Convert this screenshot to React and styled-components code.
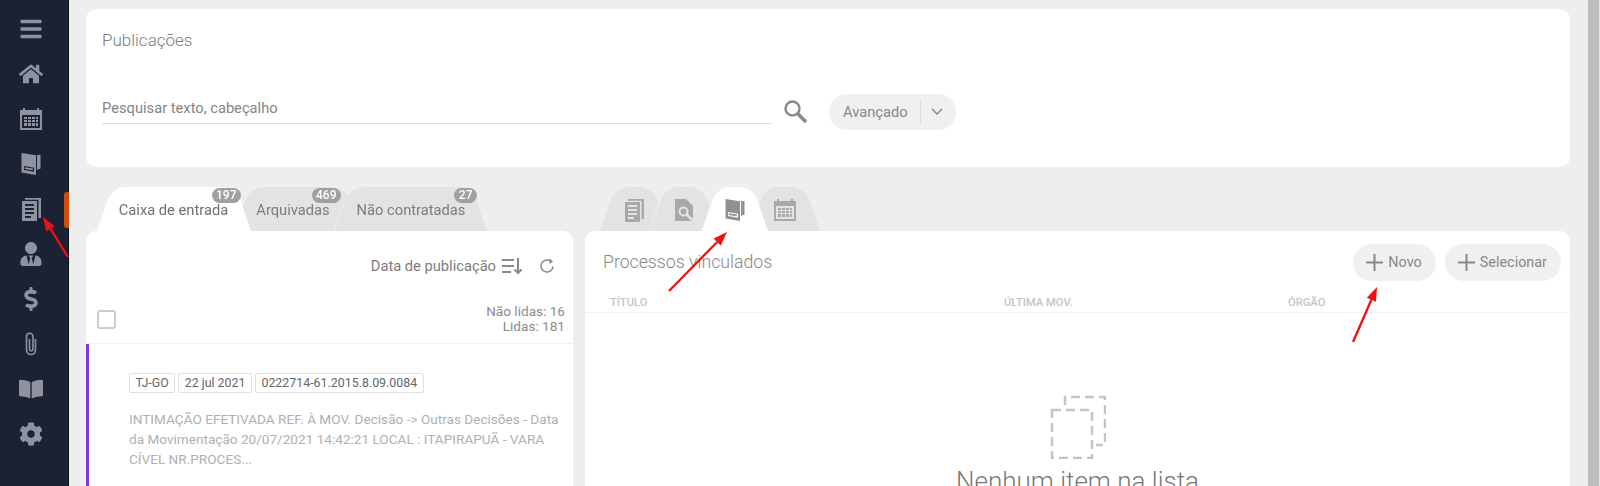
import React from "react"
import styled, { createGlobalStyle } from "styled-components"
import { FaBars, FaHome, FaUserTie, FaDollarSign, FaBookOpen, FaCog } from "react-icons/fa"

const GlobalStyle = createGlobalStyle`
  html, body {
    margin: 0;
    height: 486px;
    overflow: hidden;
    background: #eeeeee;
    font-family: Roboto, "Liberation Sans", sans-serif;
  }
`

const Page = styled.div`
  position: relative;
  display: flex;
  width: 1600px;
  height: 486px;
  overflow: hidden;
  background: #eeeeee;
`

const Sidebar = styled.nav`
  position: relative;
  flex: 0 0 69px;
  box-sizing: border-box;
  display: flex;
  flex-direction: column;
  padding-top: 6px;
  background: #1b2234;
  border-right: 1px solid #0b0e18;
  color: #90939f;
`

const SideItem = styled.div`
  height: 45px;
  width: 61px;
  display: flex;
  align-items: center;
  justify-content: center;
  font-size: 24px;
`

const ActiveMark = styled.span`
  position: absolute;
  top: 192px;
  right: -1px;
  width: 5px;
  height: 36px;
  border-radius: 3px 0 0 3px;
  background: #d14c0c;
`

const Main = styled.main`
  flex: 1;
  box-sizing: border-box;
  padding: 9px 18px 0 17px;
  display: flex;
  flex-direction: column;
  min-width: 0;
`

const Scrollbar = styled.div`
  flex: 0 0 12px;
  box-sizing: border-box;
  background: #bdbdbd;
  border-right: 1px solid #e6e6e6;
`

const Card = styled.section`
  background: #fff;
  border-radius: 10px;
`

const SearchCard = styled(Card)`
  height: 158px;
  flex: none;
  box-sizing: border-box;
  padding: 21px 16px 0;
`

const CardTitle = styled.h2`
  margin: 0;
  font-size: 17px;
  line-height: 20px;
  font-weight: 300;
  color: #7c7c7c;
`

const SearchRow = styled.div`
  display: flex;
  align-items: flex-start;
  margin-top: 34px;
`

const SearchField = styled.div`
  width: 669px;
  height: 40px;
  box-sizing: border-box;
  padding-top: 15px;
  border-bottom: 1px solid #dcdcdc;
  font-size: 14.7px;
  line-height: 18px;
  color: #858585;
`

const SearchIcon = styled.svg`
  flex: none;
  margin: 16px 22px 0 13px;
`

const AdvancedPill = styled.div`
  width: 127px;
  height: 36px;
  margin-top: 10px;
  box-sizing: border-box;
  display: flex;
  align-items: center;
  padding-left: 14px;
  border-radius: 18px;
  background: #f0f0f0;
  font-size: 14.7px;
  color: #888;
`

const PillDivider = styled.span`
  width: 1px;
  height: 26px;
  margin: 0 10px 0 12px;
  background: #dcdcdc;
`

const Columns = styled.div`
  display: flex;
  gap: 12px;
  margin-top: 20px;
  flex: 1;
  min-height: 0;
`

const LeftColumn = styled.div`
  width: 487px;
  flex: none;
  display: flex;
  flex-direction: column;
`

const RightColumn = styled.div`
  flex: 1;
  display: flex;
  flex-direction: column;
  min-width: 0;
`

const TabBar = styled.div`
  display: flex;
  height: 44px;
  flex: none;
  padding-left: ${({ $inset }) => $inset}px;
`

const Tab = styled.div`
  --tab-fill: ${({ $active }) => ($active ? "#fff" : "#e3e3e3")};
  position: relative;
  box-sizing: border-box;
  width: ${({ $w }) => $w}px;
  margin-left: ${({ $overlap }) => -($overlap || 0)}px;
  padding: 2px ${({ $pad }) => $pad || 0}px 0 0;
  z-index: ${({ $z }) => $z};
  display: flex;
  align-items: center;
  justify-content: center;
  font-size: 14.7px;
  color: ${({ $active }) => ($active ? "#707070" : "#7c7c7c")};
  filter: drop-shadow(-1px 0 0 #eeeeee);
  background: linear-gradient(var(--tab-fill), var(--tab-fill)) center bottom / 30px calc(100% - 13px) no-repeat;

  &::before,
  &::after {
    content: "";
    position: absolute;
    top: 0;
    bottom: 0;
    width: calc(50% - 10px);
    background: var(--tab-fill);
    z-index: -1;
  }

  &::before {
    left: 0;
    border-radius: 13px 0 0 0;
    transform-origin: bottom left;
    transform: skewX(-19deg);
  }

  &::after {
    right: 0;
    border-radius: 0 13px 0 0;
    transform-origin: bottom right;
    transform: skewX(19deg);
  }
`

const TabGlyph = styled.span`
  display: flex;
  color: ${({ $active }) => ($active ? "#909090" : "#a9a9a9")};
`

const Badge = styled.span`
  position: absolute;
  top: 1px;
  right: ${({ $right }) => $right}px;
  height: 15px;
  padding: 0 4.5px;
  border-radius: 8px;
  background: #a0a0a0;
  color: #fff;
  font-size: 12px;
  font-weight: 500;
  line-height: 15px;
`

const ListCard = styled(Card)`
  flex: 1;
  border-bottom-left-radius: 0;
  border-bottom-right-radius: 0;
  overflow: hidden;
`

const SortRow = styled.div`
  height: 70px;
  box-sizing: border-box;
  display: flex;
  align-items: center;
  justify-content: flex-end;
  padding: 0 18px 0 0;
  font-size: 14.7px;
  color: #7c7c7c;
  gap: 6px;
`

const RefreshSlot = styled.span`
  display: flex;
  margin-left: 11px;
`

const SelectRow = styled.div`
  height: 43px;
  box-sizing: border-box;
  display: flex;
  align-items: flex-start;
  justify-content: space-between;
  padding: 3px 8px 0 11px;
  border-bottom: 1px solid #f0f0f0;
`

const Checkbox = styled.span`
  width: 15px;
  height: 15px;
  margin-top: 6px;
  border: 2px solid #cccccc;
  border-radius: 3px;
`

const Counts = styled.div`
  text-align: right;
  font-size: 13.6px;
  line-height: 15px;
  color: #8c8c8c;
`

const Publication = styled.article`
  box-sizing: border-box;
  height: 150px;
  padding: 29px 12px 0 40px;
  border-left: 3px solid #7c3be0;
`

const Chips = styled.div`
  display: flex;
  gap: 3px;
`

const Chip = styled.span`
  box-sizing: border-box;
  height: 20px;
  padding: 0 5.5px;
  border: 1px solid #e0e0e0;
  border-radius: 2px;
  font-size: 12.4px;
  line-height: 18px;
  color: #666;
`

const Excerpt = styled.p`
  margin: 16px 0 0;
  font-size: 13.6px;
  line-height: 20px;
  color: #b0b0b0;
`

const LinkedCard = styled(Card)`
  flex: 1;
  border-bottom-left-radius: 0;
  border-bottom-right-radius: 0;
  overflow: hidden;
`

const LinkedHeader = styled.div`
  height: 59px;
  box-sizing: border-box;
  display: flex;
  align-items: center;
  padding: 3px 9px 0 18px;
  gap: 9px;
`

const LinkedTitle = styled(CardTitle)`
  flex: 1;
  font-size: 17.7px;
  color: #888;
`

const AddButton = styled.div`
  height: 37px;
  box-sizing: border-box;
  display: flex;
  align-items: center;
  gap: 5px;
  padding: 0 14px 0 13px;
  border-radius: 19px;
  background: #f0f0f0;
  font-size: 14.4px;
  color: #888;
`

const TableHead = styled.div`
  display: grid;
  grid-template-columns: 394px 284px 1fr;
  height: 23px;
  box-sizing: border-box;
  padding: 6px 0 0 25px;
  border-bottom: 1px solid #f0f0f0;
  font-size: 11.2px;
  line-height: 13px;
  font-weight: 500;
  color: #c4c4c4;
`

const EmptyState = styled.div`
  display: flex;
  flex-direction: column;
  align-items: center;
  padding-top: 82px;
  color: #777;
`

const EmptyText = styled.div`
  margin-top: 7px;
  font-size: 26px;
  line-height: 30px;
  font-weight: 300;
`

const ArrowLayer = styled.svg`
  position: absolute;
  top: 0;
  left: 0;
  z-index: 5;
  pointer-events: none;
`

const CalendarIcon = () => (
  <svg width="24" height="24" viewBox="0 0 24 24" fill="currentColor">
    <path
      fillRule="evenodd"
      d="M1 3h3V1h2v2h12V1h2v2h3v20H1V3zm2 5v13h18V8H3zm2 2h3v2H5v-2zm4 0h3v2H9v-2zm4 0h3v2h-3v-2zm4 0h2v2h-2v-2zM5 13h3v2H5v-2zm4 0h3v2H9v-2zm4 0h3v2h-3v-2zm4 0h2v2h-2v-2zM5 16h3v3H5v-3zm4 0h3v3H9v-3zm4 0h3v3h-3v-3zm4 0h2v3h-2v-3z"
    />
  </svg>
)

const FolderDocIcon = () => (
  <svg width="24" height="24" viewBox="0 0 24 24" fill="currentColor">
    <path
      fillRule="evenodd"
      d="M2.5 1L17 3.3V23L2.5 20.5V1zM5 14v4l10 1.7v-4L5 14z"
    />
    <path d="M5.8 15.3l8 1.3v1.7l-8-1.3z" />
    <path d="M18 3h3.5v13.5L18 18z" />
  </svg>
)

const DocsIcon = () => (
  <svg width="24" height="24" viewBox="0 0 24 24" fill="currentColor">
    <path
      fillRule="evenodd"
      d="M3 4h15v20H3V4zm3 3v2h9V7H6zm0 4v2h9v-2H6zm0 4v2h9v-2H6zm0 4v2h6v-2H6z"
    />
    <path d="M6 1h16v20h-2.5V2.7H6V1z" />
  </svg>
)

const DocSearchIcon = () => (
  <svg width="24" height="24" viewBox="0 0 24 24" fill="currentColor">
    <path d="M3 1h11l7 7v15H3V1z" />
    <circle cx="11.5" cy="13.5" r="4" fill="none" stroke="#e3e3e3" strokeWidth="2" />
    <path d="M14.5 16.5L22 23.5" stroke="#e3e3e3" strokeWidth="2.5" />
  </svg>
)

const ClipIcon = () => (
  <svg width="12" height="24" viewBox="0 0 12 24" fill="none" stroke="currentColor" strokeWidth="1.6">
    <path d="M4.5 7V17a1.75 1.75 0 0 0 3.5 0V4.5a3.25 3.25 0 0 0-6.5 0V18a4.5 4.5 0 0 0 9 0V7" />
  </svg>
)

const SortIcon = () => (
  <svg width="20" height="18" viewBox="0 0 20 18" fill="none" stroke="#888" strokeWidth="2">
    <path d="M0 3h12M0 9h12M0 15h9M16 1v15M12.5 12.5L16 16l3.5-3.5" />
  </svg>
)

const RefreshIcon = () => (
  <svg width="16" height="16" viewBox="0 0 16 16" fill="none" stroke="#888" strokeWidth="1.5">
    <path d="M14 8.5A6 6 0 1 1 11.5 3.2" />
    <path d="M10.5 0.5l3.5 3-3.5 2.5z" fill="#888" stroke="none" />
  </svg>
)

const Chevron = () => (
  <svg width="12" height="8" viewBox="0 0 12 8" fill="none" stroke="#888" strokeWidth="1.5">
    <path d="M1 1l5 5 5-5" />
  </svg>
)

const Plus = () => (
  <svg width="17" height="17" viewBox="0 0 17 17" stroke="#888" strokeWidth="2">
    <path d="M0 8.5h17M8.5 0v17" />
  </svg>
)

const DashedDocs = () => (
  <svg width="56" height="64" viewBox="0 0 56 64" fill="none" stroke="#c4c4c4" strokeWidth="2.5">
    <rect x="2" y="15" width="40" height="48" strokeDasharray="9 5" />
    <path d="M15 10V2h40v48h-9" strokeDasharray="9 5" />
  </svg>
)

const Arrow = ({ x1, y1, x2, y2 }) => {
  const a = Math.atan2(y2 - y1, x2 - x1)
  const l = 14
  const w = 5
  const bx = x2 - l * Math.cos(a)
  const by = y2 - l * Math.sin(a)
  const nx = -Math.sin(a) * w
  const ny = Math.cos(a) * w
  return (
    <g>
      <line x1={x1} y1={y1} x2={bx} y2={by} stroke="#f01010" strokeWidth="2.3" />
      <polygon
        fill="#f01010"
        points={`${x2},${y2} ${bx + nx},${by + ny} ${bx - nx},${by - ny}`}
      />
    </g>
  )
}

const App = () => (
  <Page>
    <GlobalStyle />
    <Sidebar>
      <SideItem><FaBars /></SideItem>
      <SideItem><FaHome /></SideItem>
      <SideItem><CalendarIcon /></SideItem>
      <SideItem><FolderDocIcon /></SideItem>
      <SideItem><DocsIcon /></SideItem>
      <SideItem><FaUserTie /></SideItem>
      <SideItem><FaDollarSign /></SideItem>
      <SideItem><ClipIcon /></SideItem>
      <SideItem><FaBookOpen /></SideItem>
      <SideItem><FaCog /></SideItem>
      <ActiveMark />
    </Sidebar>
    <Main>
      <SearchCard>
        <CardTitle>Publicações</CardTitle>
        <SearchRow>
          <SearchField>Pesquisar texto, cabeçalho</SearchField>
          <SearchIcon width="23" height="23" viewBox="0 0 23 23" fill="none" stroke="#8a8a8a">
            <circle cx="8.5" cy="8.5" r="7" strokeWidth="2.5" />
            <path d="M13.5 13.5L22 22" strokeWidth="3.5" />
          </SearchIcon>
          <AdvancedPill>
            Avançado
            <PillDivider />
            <Chevron />
          </AdvancedPill>
        </SearchRow>
      </SearchCard>
      <Columns>
        <LeftColumn>
          <TabBar $inset={11}>
            <Tab $w={153} $z={3} $active>
              Caixa de entrada
              <Badge $right={9}>197</Badge>
            </Tab>
            <Tab $w={125} $overlap={15} $z={1} $pad={9}>
              Arquivadas
              <Badge $right={19}>469</Badge>
            </Tab>
            <Tab $w={152} $overlap={25} $z={2}>
              Não contratadas
              <Badge $right={10}>27</Badge>
            </Tab>
          </TabBar>
          <ListCard>
            <SortRow>
              Data de publicação
              <SortIcon />
              <RefreshSlot><RefreshIcon /></RefreshSlot>
            </SortRow>
            <SelectRow>
              <Checkbox />
              <Counts>
                Não lidas: 16
                <br />
                Lidas: 181
              </Counts>
            </SelectRow>
            <Publication>
              <Chips>
                <Chip>TJ-GO</Chip>
                <Chip>22 jul 2021</Chip>
                <Chip>0222714-61.2015.8.09.0084</Chip>
              </Chips>
              <Excerpt>
                INTIMAÇÃO EFETIVADA REF. À MOV. Decisão -&gt; Outras Decisões - Data da
                Movimentação 20/07/2021 14:42:21 LOCAL : ITAPIRAPUÃ - VARA CÍVEL
                NR.PROCES...
              </Excerpt>
            </Publication>
          </ListCard>
        </LeftColumn>
        <RightColumn>
          <TabBar $inset={15}>
            <Tab $w={67} $z={1}><TabGlyph><DocsIcon /></TabGlyph></Tab>
            <Tab $w={68} $overlap={17} $z={2}><TabGlyph><DocSearchIcon /></TabGlyph></Tab>
            <Tab $w={66} $overlap={16} $z={4} $active><TabGlyph $active><FolderDocIcon /></TabGlyph></Tab>
            <Tab $w={70} $overlap={18} $z={3}><TabGlyph><CalendarIcon /></TabGlyph></Tab>
          </TabBar>
          <LinkedCard>
            <LinkedHeader>
              <LinkedTitle>Processos vinculados</LinkedTitle>
              <AddButton><Plus /> Novo</AddButton>
              <AddButton><Plus /> Selecionar</AddButton>
            </LinkedHeader>
            <TableHead>
              <span>TÍTULO</span>
              <span>ÚLTIMA MOV.</span>
              <span>ÓRGÃO</span>
            </TableHead>
            <EmptyState>
              <DashedDocs />
              <EmptyText>Nenhum item na lista</EmptyText>
            </EmptyState>
          </LinkedCard>
        </RightColumn>
      </Columns>
    </Main>
    <Scrollbar />
    <ArrowLayer width="1600" height="486">
      <Arrow x1={68} y1={257} x2={43} y2={217} />
      <Arrow x1={669} y1={291} x2={727} y2={232} />
      <Arrow x1={1353} y1={342} x2={1377} y2={287} />
    </ArrowLayer>
  </Page>
)

export default App
